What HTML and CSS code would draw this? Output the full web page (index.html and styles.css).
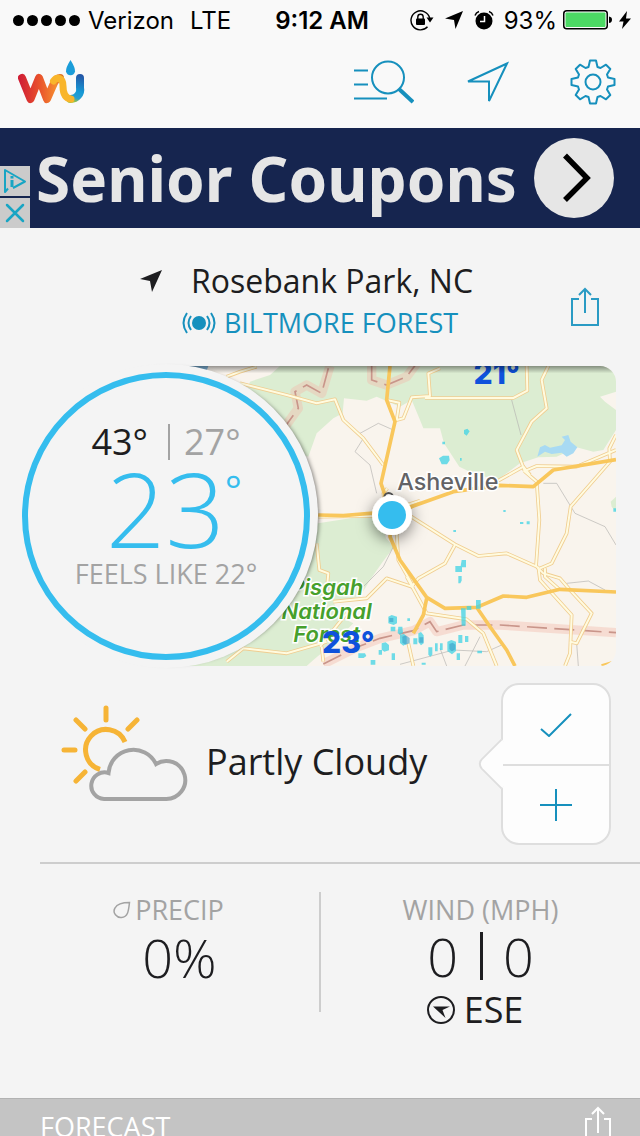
FILE: index.html
```html
<!DOCTYPE html>
<html lang="en">
<head>
  <meta charset="UTF-8" />
  <meta name="viewport" content="width=device-width, initial-scale=1.0"/>
  <title>Weather</title>
  <link rel="stylesheet" href="styles.css">
</head>
<body>

<!-- Status bar -->
<div class="status">
  <div class="status-left">
    <span class="dots"><i></i><i></i><i></i><i></i><i></i></span>
    <span class="carrier">Verizon</span>
    <span>LTE</span>
  </div>
  <div class="status-time">9:12 AM</div>
  <div class="status-right">
    <div class="status-icons">
      <svg width="24" height="22" viewBox="0 0 24 22">
        <path d="M17.5 17.8 A9.5 9.5 0 1 1 19.7 9" fill="none" stroke="#000" stroke-width="1.4"/>
        <path d="M16.5 8.5h7l-3.500 5z"/>
        <rect x="6" y="9.500" width="9" height="6.500" rx="1"/>
        <path d="M7.800 10V8a2.700 2.700 0 0 1 5.400 0v2" fill="none" stroke="#000" stroke-width="1.400"/>
      </svg>
      <svg width="18" height="18" viewBox="0 0 18 18"><path d="M18 0 10.500 18 9 9 0 7.500z"/></svg>
      <svg width="20" height="20" viewBox="0 0 20 20">
        <circle cx="10" cy="11" r="8.500"/>
        <path d="M1 5.500Q2 2.500 5 1.500M19 5.500Q18 2.500 15 1.500" fill="none" stroke="#000" stroke-width="1.500"/>
        <path d="M10.500 6v5.500H6" fill="none" stroke="#fff" stroke-width="1.500"/>
      </svg>
    </div>
    <span>93%</span>
    <svg width="50" height="20" viewBox="0 0 50 20">
      <rect x=".75" y=".75" width="43.500" height="18" rx="3" fill="#fff" stroke="#000" stroke-width="1.500"/>
      <rect x="2.500" y="2.500" width="40" height="14.500" rx="1" fill="#4cd964"/>
      <path d="M46 6.500q3 .5 3 3.300t-3 3.300z"/>
    </svg>
    <svg width="12" height="20" viewBox="0 0 12 20"><path d="M8 1 0 11.500h4.500L3 19 12 8.500H7z"/></svg>
  </div>
</div>

<!-- Top nav -->
<header class="nav">
  <a class="logo" href="#" aria-label="Home">
    <svg width="68" height="46" viewBox="0 0 68 46" fill="none" stroke-linecap="round" stroke-linejoin="round">
      <defs>
        <linearGradient id="wGrad" gradientUnits="userSpaceOnUse" x1="2" y1="0" x2="44" y2="0">
          <stop offset="0" stop-color="#d01f35"/>
          <stop offset=".45" stop-color="#e8502c"/>
          <stop offset=".85" stop-color="#f58a30"/>
          <stop offset="1" stop-color="#d9701e"/>
        </linearGradient>
        <linearGradient id="uGrad" gradientUnits="userSpaceOnUse" x1="62" y1="16" x2="54" y2="42">
          <stop offset="0" stop-color="#2457a7"/>
          <stop offset=".6" stop-color="#169ad6"/>
          <stop offset=".85" stop-color="#2a9fd0"/>
          <stop offset="1" stop-color="#9cc43c"/>
        </linearGradient>
      </defs>
      <path d="M4 19 12.500 40 21 19 29 40 36 24Q38.500 19 42 19" stroke="url(#wGrad)" stroke-width="8"/>
      <path d="M62 19v9.500a9.500 9.500 0 0 1-9.500 11.500" stroke="url(#uGrad)" stroke-width="8"/>
      <path d="M35.500 22Q38 18.500 41.500 19.500 45 21 45 27q0 12 8 13" stroke="#f9b52b" stroke-width="7"/>
      <path d="M52.500 1Q57.500 9 57 12.500a4.600 4.600 0 0 1-9 0Q47.500 9 52.500 1z" fill="#1b9dd9"/>
    </svg>
  </a>
  <nav class="nav-icons">
    <button type="button" aria-label="Search">
      <svg width="62" height="46" viewBox="0 0 62 46" fill="none" stroke="#1690bd" stroke-width="2">
        <path d="M2 11.500h14M2 25.500h14M2 39.500h33"/>
        <circle cx="36" cy="18.500" r="16"/>
        <path d="M47 30 61 43" stroke-width="4"/>
      </svg>
    </button>
    <button type="button" aria-label="Locate">
      <svg width="56" height="46" viewBox="0 0 56 46" fill="none" stroke="#1690bd" stroke-width="2">
        <path d="M43 4.500 4 22.500H25V42z"/>
      </svg>
    </button>
    <button type="button" aria-label="Settings">
      <svg width="46" height="46" viewBox="-23 -23 46 46" fill="none" stroke="#1690bd" stroke-width="2" stroke-linejoin="round">
        <path d="M-4.500-15-3-21.500H3L4.500-15 7.500-14 13-17.300 17.300-13 14-7.500 15-4.500 21.500-3V3L15 4.500 14 7.500 17.300 13 13 17.300 7.500 14 4.500 15 3 21.500H-3L-4.500 15-7.500 14-13 17.300-17.300 13-14 7.500-15 4.500-21.500 3V-3L-15-4.500-14-7.500-17.300-13-13-17.300-7.500-14z"/>
        <circle r="7.500"/>
      </svg>
    </button>
  </nav>
</header>

<!-- Ad -->
<aside class="ad">
  <div class="ad-tools">
    <button type="button" aria-label="Ad info">
      <svg width="30" height="30" viewBox="0 0 30 30" fill="none" stroke="#18a5c4" stroke-width="2" stroke-linejoin="round">
        <path d="M8 22.500 5 26V4L25 15.500 13 22"/>
        <path d="M12 14v7M12 10v2.500" stroke-width="3"/>
      </svg>
    </button>
    <button type="button" aria-label="Close ad">
      <svg width="30" height="30" viewBox="0 0 30 30" stroke="#18a5c4" stroke-width="2.500" stroke-linecap="round"><path d="M7 7 23 23M23 7 7 23"/></svg>
    </button>
  </div>
  <a class="ad-text" href="#">Senior Coupons</a>
  <button class="ad-go" type="button" aria-label="Open ad">
    <svg width="80" height="80" viewBox="0 0 80 80" fill="none" stroke="#000" stroke-width="5.500"><path d="M31 17.500 53 40 31 62"/></svg>
  </button>
</aside>

<!-- Location -->
<section class="location">
  <div class="place">
    <h1>
      <svg width="24" height="24" viewBox="0 0 24 24"><path d="M23 1 13 23 11 12 1 10z" fill="#1d1d20"/></svg>
      Rosebank Park, NC
    </h1>
    <a class="station" href="#">
      <svg width="34" height="22" viewBox="0 0 34 22" fill="none" stroke="#1690bd" stroke-width="2">
        <circle cx="17" cy="11" r="7" fill="#1690bd" stroke="none"/>
        <path d="M5 1Q-2 11 5 21M9 4Q4 11 9 18M29 1Q36 11 29 21M25 4Q30 11 25 18"/>
      </svg>
      BILTMORE FOREST
    </a>
  </div>
  <button class="share" type="button" aria-label="Share">
    <svg width="30" height="40" viewBox="0 0 30 40" fill="none" stroke="#2a9bc4" stroke-width="2">
      <path d="M9 12H2V38H28V12H21M15 26V2M9 8 15 2 21 8"/>
    </svg>
  </button>
</section>

<!-- Map and temperature dial -->
<section class="hero">
  <svg class="map" viewBox="-102 18 1350 900" preserveAspectRatio="xMinYMid slice">
    <defs>
      <filter id="pinShadow" x="-50%" y="-50%" width="200%" height="200%">
        <feDropShadow dx="0" dy="12" stdDeviation="22" flood-color="#000" flood-opacity=".5"/>
      </filter>
      <linearGradient id="edge" x1="0" y1="0" x2="0" y2="1">
        <stop offset="0" stop-color="#000" stop-opacity=".4"/>
        <stop offset="1" stop-color="#000" stop-opacity="0"/>
      </linearGradient>
      <g id="minorRoads">
        <path d="M80 50 120 35 170 20M120 70 260 105 350 130 405 118 430 180 490 235 550 315"/>
        <path d="M560 120 598 128 590 180 610 175 635 112 690 108 685 40 720 25M675 114H940L982 92 980 18"/>
        <path d="M1045 18 1025 60 1040 145 995 185 950 270 975 335 1010 365 1018 480 1008 620"/>
        <path d="M895 362 970 320 990 345M970 335 1010 318 1130 320 1248 270M1248 225 1228 265 1230 305 1112 440 1100 520 1055 610 1020 625"/>
        <path d="M610 455 765 553 835 588 920 580 1010 620 1030 640 1080 655 1110 690 1175 760 1130 850 1110 845"/>
        <path d="M1015 620 1020 660 1115 765 1110 880 1095 918M1035 625 1035 650 1080 690"/>
        <path d="M765 555 735 610 655 655 635 680 560 655 500 715 400 725"/>
        <path d="M350 550 358 630 385 640 380 690M620 650 680 760 800 778 850 820 890 918"/>
        <path d="M590 520 595 600 640 680M80 905 130 865 260 880 380 845M355 470 520 468 660 422M560 470 550 400 562 385"/>
        <path d="M360 860 440 760M365 860 370 905M625 850 640 918"/>
      </g>
    </defs>
    <rect x="-102" y="18" width="1350" height="900" fill="#f9f4ed"/>
    <!-- forest -->
    <g fill="#dcedd2">
      <path d="M240 18 210 45 150 65 140 90 270 270 325 290 350 220 400 175 428 160 432 115 500 122 530 110 600 140 635 120 660 180 670 205 720 205 732 250 755 285 778 320 830 345 895 358 960 310 1015 292 1070 290 1130 262 1180 275 1210 270 1248 210V150L1215 125 1200 110 1248 95V18z"/>
      <path d="M340 492 470 472 540 465 558 535 582 560 545 610 510 660 480 710 400 725 420 770 460 790 400 850 340 900 320 918H-102V600z"/>
      <path d="M1232 425 1248 410V455L1235 440z"/>
    </g>
    <path d="M1020 262 1035 255 1050 263 1085 256 1095 240 1085 230 1105 225 1112 245 1132 262 1120 280 1100 290 1085 278 1055 282 1035 275 1012 290z" fill="#a8daf3"/>
    <path d="M-60 18H25L20 32z" fill="#7fb5dc"/>
    <!-- borders -->
    <g fill="none" stroke="#f3b9aa" stroke-opacity=".4" stroke-width="28" stroke-linejoin="round">
      <path d="M390 18 365 100 320 75 285 95 295 145 255 200M515 18V60L560 75 620 50 650 10"/>
      <path d="M370 912 470 862 540 835 640 812 690 785 710 815 790 795 900 795 1248 818"/>
    </g>
    <g fill="none" stroke="#c9958a" stroke-width="5" stroke-dasharray="60 22">
      <path d="M385 25 365 100 320 75 285 95 295 145 255 200M515 18V60L560 75 620 50 650 10"/>
      <path d="M370 912 470 862 540 835 640 812 690 785 710 815 790 795 900 795 1248 818"/>
    </g>
    <g fill="none" stroke="#b5b4b0" stroke-width="2">
      <path d="M530 400 510 315 465 275 490 235 480 220 535 190 580 210M935 120 963 225M1030 370H1070L1125 460 1215 500 1248 555"/>
      <path d="M490 680 550 620 580 560M1130 850 1135 918M600 913 760 870 860 875 905 855M1100 670 1165 663 1215 690M720 865 740 918M840 830 795 918"/>
    </g>
    <!-- roads -->
    <use href="#minorRoads" fill="none" stroke="#f0cd90" stroke-width="11" stroke-linejoin="round"/>
    <use href="#minorRoads" fill="none" stroke="#fffbe0" stroke-width="6" stroke-linejoin="round"/>
    <g fill="none" stroke="#f9c75c" stroke-width="11" stroke-linejoin="round">
      <path d="M570 18 560 120 585 185 543 370 575 465 570 530 600 600 680 712 735 745 830 742 910 708 980 712 1080 688 1248 696"/>
      <path d="M680 715 670 765 640 820M830 742 870 800 920 870 945 918M1205 918 1248 905"/>
      <path d="M355 465 430 467 520 459 575 465 640 438 760 395 900 376 1000 380 1060 330 1248 299"/>
    </g>
    <!-- radar -->
    <g fill="#3fd3e4" fill-opacity=".75">
      <path d="M717 295l12-8h18l2 14-8 12h-16zM792 210l10-4 7 8-9 13-8-6zM727 245h8v8h-8zM780 294h5v8h-5zM910 450h7v6h-7zM960 486h10v6h-10zM980 484h9v9h-9zM760 510h8v6h-8z"/>
      <path d="M785 600h13v22h-12v14h-20v-18h16zM775 648h10v14l-4 8h-6zM783 745h14v52h-12zM800 738h14v12h-14zM828 720h14v26h-14zM565 770l10-5 16 5v20l-10 5-16-5zM572 800h14v14h-14zM320 655h12v48h-16z"/>
      <path d="M595 800h12l2 18-8 6-8-4zM545 850l12-3 10 8v16l-14 4-8-6zM475 880h20l4 8-8 6h-16zM512 900h14v14h-14zM600 825l12-4 8 10v20l-10 6-10-8zM640 835h12v18h-12zM655 820l8-4 8 10v24l-8 6-8-10zM575 880h10v20h-10zM685 862h12v22l-6 6-6-6zM705 850h8v24h-8zM720 850h8v20h-8zM742 845l12-5 14 5v28l-12 10-14-10zM775 825h12v24h-12zM795 828h10v18h-10zM832 872h14v8h-14zM770 880h10v20h-10zM665 908h12v6h-12zM536 870h10v14h-10zM622 775h8v8h-8zM1240 445h8v10h-8z"/>
    </g>
    <g fill="#3a9cc8" fill-opacity=".6">
      <path d="M607 830l10-4 12 8v16l-12 4-10-6zM748 852l10-4 8 6v14l-10 6-8-6zM568 774h12v12h-12zM658 832h12v16h-12z"/>
    </g>
    <circle cx="566" cy="412" r="13" fill="#fff" stroke="#555" stroke-width="6"/>
    <text class="map-city" x="592" y="389">Asheville</text>
    <g class="map-park">
      <text x="380" y="705">Pisgah</text>
      <text x="380" y="776">National</text>
      <text x="380" y="846">Forest</text>
    </g>
    <text class="map-temp" x="890" y="72">21°</text>
    <text class="map-temp" x="445" y="878">23°</text>
    <g filter="url(#pinShadow)"><circle cx="576" cy="465" r="60" fill="#fff"/></g>
    <circle cx="576" cy="465" r="42" fill="#35bdee"/>
    <rect x="-102" y="18" width="1350" height="22" fill="url(#edge)"/>
  </svg>

  <div class="dial">
    <div class="dial-ring">
      <div class="hi-lo"><span class="hi">43°</span><span class="lo">27°</span></div>
      <div class="temp">23<sup>°</sup></div>
      <div class="feels">FEELS LIKE 22°</div>
    </div>
  </div>
</section>

<!-- Current conditions -->
<section class="condition">
  <svg width="128" height="100" viewBox="0 0 128 100" fill="none" stroke-width="4">
    <path d="M46 4V16M16 16 25 25M77 16 68 25M4 46H15M16 77 25 68" stroke="#f6b436" stroke-width="5" stroke-linecap="round"/>
    <path d="M40 65.500A20.500 20.500 0 1 1 65 38" stroke="#f6b436" stroke-width="5"/>
    <path d="M44 95A13.300 13.300 0 1 1 48.500 69 25 25 0 0 1 96 60 19 19 0 1 1 106 95z" stroke="#a3a3a3"/>
  </svg>
  <h2>Partly Cloudy</h2>
  <div class="vote">
    <button type="button" aria-label="Confirm">
      <svg width="32" height="24" viewBox="0 0 32 24" fill="none" stroke="#1690bd" stroke-width="2"><path d="M1 16 9 23 31 1"/></svg>
    </button>
    <button type="button" aria-label="Add report">
      <svg width="32" height="32" viewBox="0 0 32 32" stroke="#1690bd" stroke-width="2"><path d="M0 16H32M16 0V32"/></svg>
    </button>
  </div>
</section>

<section class="stats">
  <div class="stat">
    <h3 class="precip">
      <svg width="18" height="18" viewBox="0 0 18 18" fill="none" stroke="#a3a3a3" stroke-width="1.500"><path d="M16.500 1.500Q5 1.500 2 7C-1 12 4 17 8.500 16.500 15 16 15.500 10 16.500 1.500z"/></svg>
      PRECIP
    </h3>
    <p class="value">0%</p>
  </div>
  <div class="stat">
    <h3>WIND (MPH)</h3>
    <p class="value wind"><span>0</span><span>0</span></p>
    <p class="direction">
      <svg width="30" height="30" viewBox="0 0 30 30"><circle cx="15" cy="15" r="13" fill="none" stroke="#1d1d20" stroke-width="2"/><path d="M7 11.500H24L16.500 15 19.500 23z" fill="#1d1d20"/></svg>
      ESE
    </p>
  </div>
</section>

<footer class="forecast">
  <h3>FORECAST</h3>
  <button type="button" aria-label="Share forecast">
    <svg width="28" height="38" viewBox="0 0 28 38" fill="none" stroke="#fff" stroke-width="2"><path d="M8 14H2V37H26V14H20M14 28V3M8 9 14 3 20 9"/></svg>
  </button>
</footer>

</body>
</html>
```

FILE: styles.css
```css
:root {
  --bg: #f4f4f4;
  --text: #1d1d20;
  --muted: #a3a3a3;
  --link: #1690bd;
  --accent: #35bdee;
  --line: #cdcdcd;
}

* {
  margin: 0;
  padding: 0;
  box-sizing: border-box;
}

body {
  font-family: 'Open Sans', 'Noto Sans', sans-serif;
  background-color: var(--bg);
  color: var(--text);
  display: flex;
  flex-direction: column;
  height: 100vh;
  overflow: hidden;
}

svg {
  display: block;
  flex-shrink: 0;
}

button {
  background: none;
  border: none;
  cursor: pointer;
}

a {
  color: inherit;
  text-decoration: none;
}

h1, h2, h3 {
  font-weight: 400;
}

/* Status bar */
.status {
  display: grid;
  grid-template-columns: 1fr auto 1fr;
  align-items: center;
  height: 40px;
  padding: 0 9px 0 13px;
  background-color: #f9f9f9;
  color: #000;
  font-family: Inter, sans-serif;
  font-size: 24px;
  flex-shrink: 0;
}

.status-left {
  display: flex;
  align-items: center;
}

.dots {
  display: flex;
  gap: 3px;
  margin-right: 8px;
}

.dots i {
  width: 11px;
  height: 11px;
  border-radius: 50%;
  background-color: #000;
}

.carrier {
  margin-right: 16px;
}

.status-time {
  font-weight: 600;
}

.status-right {
  display: flex;
  align-items: center;
  justify-content: flex-end;
  gap: 6px;
}

.status-icons {
  display: flex;
  align-items: center;
  gap: 11px;
  margin-right: 4px;
}

/* Nav */
.nav {
  display: flex;
  justify-content: space-between;
  align-items: center;
  height: 88px;
  padding: 0 24px 4px 18px;
  background-color: #f9f9f9;
  flex-shrink: 0;
}

.nav-icons {
  display: flex;
  gap: 50px;
}

/* Ad */
.ad {
  display: flex;
  align-items: center;
  height: 100px;
  padding-right: 26px;
  background-color: #16254f;
  flex-shrink: 0;
}

.ad-tools {
  display: flex;
  flex-direction: column;
  align-self: flex-end;
  gap: 2px;
}

.ad-tools button {
  width: 30px;
  height: 30px;
  background-color: #cbcbcb;
}

.ad-text {
  flex: 1;
  padding-left: 6px;
  font-family: 'Noto Sans', sans-serif;
  font-size: 62px;
  font-weight: 700;
  line-height: 100px;
  color: #e6e6e6;
  white-space: nowrap;
}

.ad-go {
  width: 80px;
  height: 80px;
  border-radius: 50%;
  background-color: #e6e6e6;
}

/* Location */
.location {
  display: grid;
  grid-template-columns: 1fr auto 1fr;
  align-items: center;
  height: 138px;
  padding: 0 40px;
  flex-shrink: 0;
}

.place {
  grid-column: 2;
  display: flex;
  flex-direction: column;
  align-items: center;
  padding-top: 8px;
}

.place h1 {
  display: flex;
  align-items: center;
  gap: 28px;
  padding-right: 28px;
  font-size: 32px;
  line-height: 44px;
}

.station {
  display: flex;
  align-items: center;
  gap: 8px;
  font-size: 27px;
  line-height: 40px;
  color: var(--link);
}

.share {
  justify-self: end;
  margin-top: 20px;
}

/* Map and dial */
.hero {
  position: relative;
  height: 300px;
  padding: 0 24px 0 166px;
  flex-shrink: 0;
}

.map {
  width: 100%;
  height: 300px;
  border-radius: 0 16px 16px 0;
}

.map-city {
  font-family: Inter, sans-serif;
  font-size: 70px;
  font-weight: 500;
  fill: #636366;
  stroke: #fff;
  stroke-width: 9px;
  paint-order: stroke;
}

.map-park {
  font-family: Inter, sans-serif;
  font-size: 66px;
  font-weight: 600;
  font-style: italic;
  text-anchor: middle;
  fill: #46a02c;
  stroke: #fff;
  stroke-width: 9px;
  paint-order: stroke;
}

.map-temp {
  font-family: Inter, sans-serif;
  font-size: 90px;
  font-weight: 800;
  text-anchor: middle;
  fill: #0f52dc;
}

.dial {
  position: absolute;
  top: -2px;
  left: 14px;
  width: 304px;
  height: 304px;
  padding: 8px;
  border-radius: 50%;
  background-color: var(--bg);
  box-shadow: 5px 0 4px -4px rgba(0, 0, 0, 0.5);
}

.dial-ring {
  display: flex;
  flex-direction: column;
  align-items: center;
  height: 100%;
  padding-top: 42px;
  border: 6px solid var(--accent);
  border-radius: 50%;
}

.hi-lo {
  display: flex;
  align-items: center;
  font-size: 36px;
  line-height: 44px;
}

.hi {
  padding-right: 20px;
}

.lo {
  padding-left: 14px;
  border-left: 2px solid var(--muted);
  line-height: 36px;
  color: var(--muted);
}

.temp {
  display: flex;
  font-size: 104px;
  font-weight: 300;
  line-height: 88px;
  color: var(--accent);
  padding: 0 0 4px 16px;
}

.temp sup {
  font-size: 40px;
  line-height: 52px;
  font-weight: 400;
}

.feels {
  font-size: 27px;
  line-height: 36px;
  color: var(--muted);
}

/* Conditions */
.condition {
  display: flex;
  align-items: center;
  height: 198px;
  margin-left: 40px;
  padding: 0 29px 0 20px;
  border-bottom: 2px solid var(--line);
  flex-shrink: 0;
}

.condition > svg {
  margin-bottom: 20px;
}

.condition h2 {
  flex: 1;
  padding: 0 0 4px 18px;
  font-size: 36px;
  line-height: 44px;
}

.vote {
  position: relative;
  width: 110px;
  border: 2px solid #dedede;
  border-radius: 18px;
  background-color: #fdfdfd;
}

.vote::before {
  content: '';
  position: absolute;
  top: 61px;
  left: -20px;
  width: 34px;
  height: 34px;
  border-left: 2px solid #dedede;
  border-bottom: 2px solid #dedede;
  border-radius: 0 0 0 8px;
  background-color: #fdfdfd;
  transform: rotate(45deg);
}

.vote button {
  position: relative;
  display: flex;
  align-items: center;
  justify-content: center;
  width: 100%;
  height: 79px;
}

.vote button + button {
  border-top: 2px solid #dedede;
}

/* Stats */
.stats {
  display: grid;
  grid-template-columns: 279px 1fr;
  margin-left: 40px;
  padding-top: 28px;
  flex: 1;
}

.stat {
  display: flex;
  flex-direction: column;
  align-items: center;
  height: 120px;
}

.stat + .stat {
  border-left: 2px solid var(--line);
}

.stat h3,
.forecast h3 {
  font-size: 27px;
  line-height: 36px;
}

.stat h3 {
  color: var(--muted);
}

.stat .precip {
  display: flex;
  align-items: center;
  gap: 4px;
  padding-right: 22px;
}

.value {
  font-size: 54px;
  font-weight: 300;
  line-height: 58px;
}

.wind {
  display: flex;
  align-items: center;
  padding-top: 4px;
}

.wind span {
  line-height: 48px;
}

.wind span + span {
  margin-left: 22px;
  padding-left: 20px;
  border-left: 3px solid var(--text);
}

.direction {
  display: flex;
  align-items: center;
  gap: 8px;
  margin-top: 8px;
  padding-right: 12px;
  font-size: 36px;
  line-height: 44px;
}

/* Forecast */
.forecast {
  display: flex;
  justify-content: space-between;
  align-items: flex-start;
  height: 38px;
  padding: 6px 28px 0 40px;
  border-top: 1px solid #b2b2b2;
  background-color: #c4c4c4;
  color: #fff;
  overflow: hidden;
  flex-shrink: 0;
}

.forecast h3 {
  padding-top: 4px;
}
```
